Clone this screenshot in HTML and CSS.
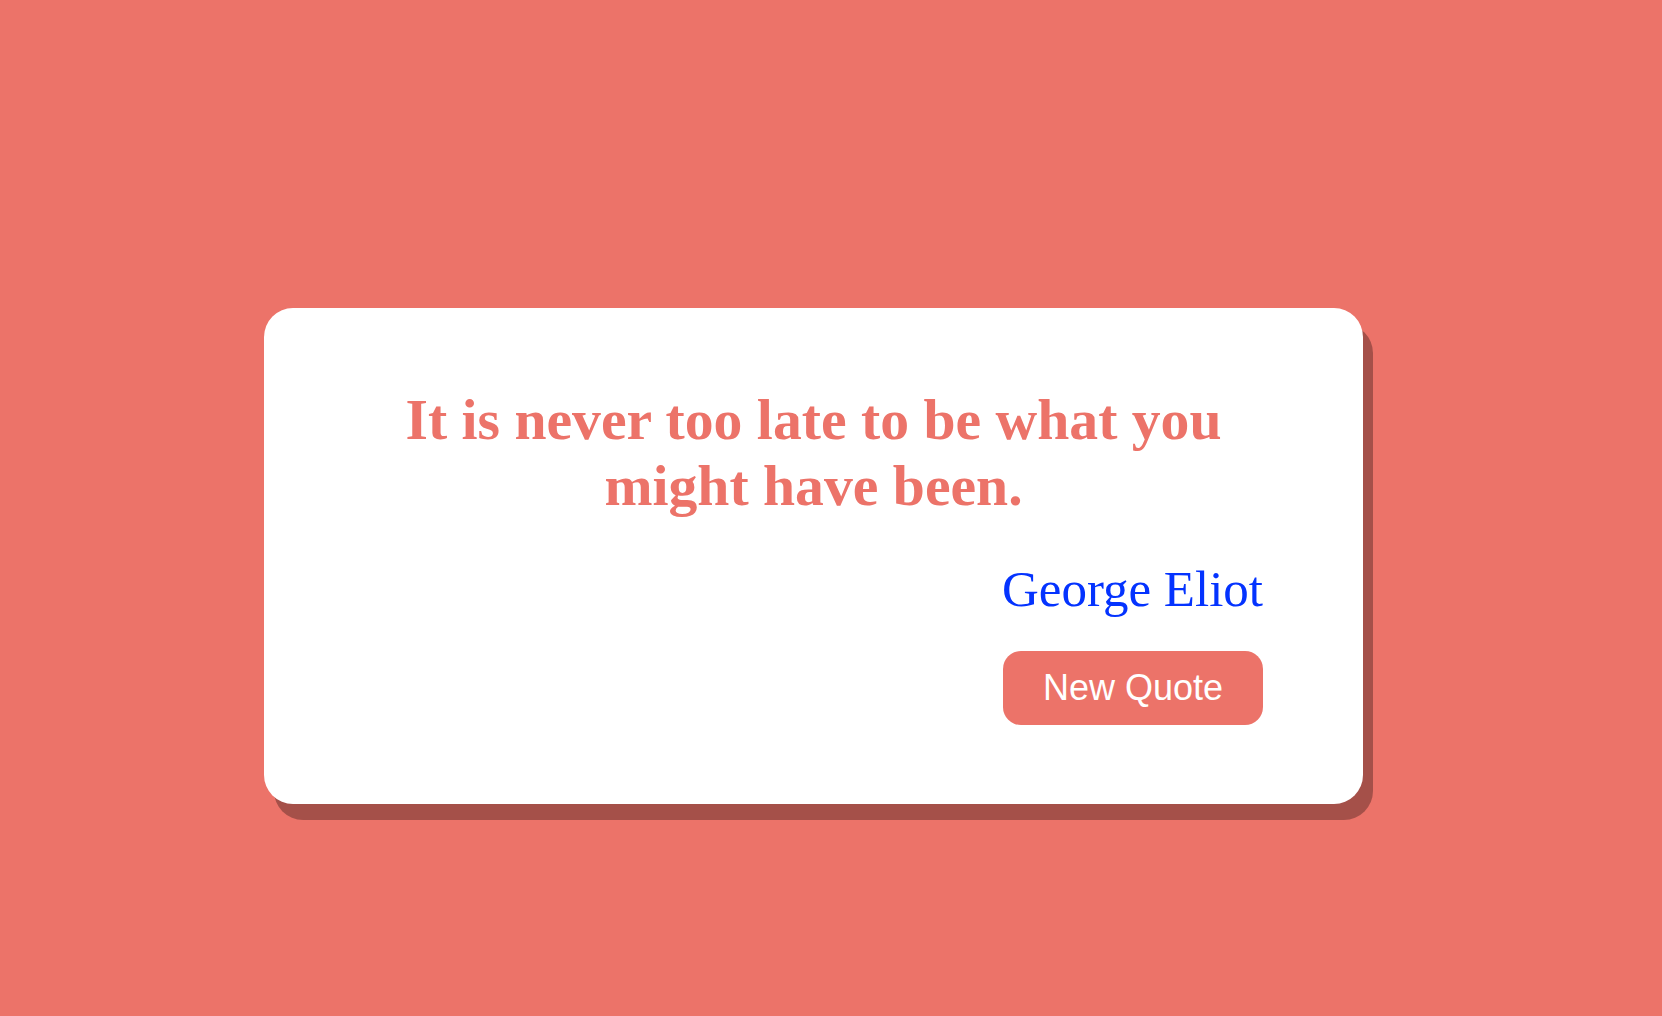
FILE: index.html
```html
<!DOCTYPE html>
<html lang="en">
<head>
<meta charset="utf-8">
<title>Quote</title>
<link rel="stylesheet" href="styles.css">
</head>
<body>
<main class="page">
  <section class="card">
    <h1 class="quote">It is never too late to be what you might have been.</h1>
    <p class="author">George Eliot</p>
    <div class="actions">
      <button class="new-quote" type="button">New Quote</button>
    </div>
  </section>
</main>
</body>
</html>
```
FILE: styles.css
```css
html, body {
  margin: 0;
  padding: 0;
}
body {
  background: #ec7369;
  min-height: 1016px;
  font-family: "Liberation Serif", "Times New Roman", serif;
}
.page {
  padding: 308px 0 0 264px;
}
.card {
  box-sizing: border-box;
  width: 1099px;
  height: 496px;
  padding: 79px 100px;
  background: #ffffff;
  border-radius: 29px;
  box-shadow: 10px 16px 0 0 rgba(0, 0, 0, 0.3);
  display: flex;
  flex-direction: column;
}
.quote {
  margin: 0;
  font-size: 57.7px;
  line-height: 66px;
  font-weight: bold;
  color: #ec7369;
  text-align: center;
}
.author {
  margin: 42px 0 0;
  font-size: 51px;
  line-height: 57px;
  color: #0433ff;
  text-align: right;
}
.actions {
  margin-top: 33px;
  display: flex;
  justify-content: flex-end;
}
.new-quote {
  font-family: "Liberation Sans", Arial, sans-serif;
  font-size: 36px;
  line-height: 42px;
  padding: 16px 40px;
  border: none;
  border-radius: 18px;
  background: #ec7369;
  color: #ffffff;
}
```
